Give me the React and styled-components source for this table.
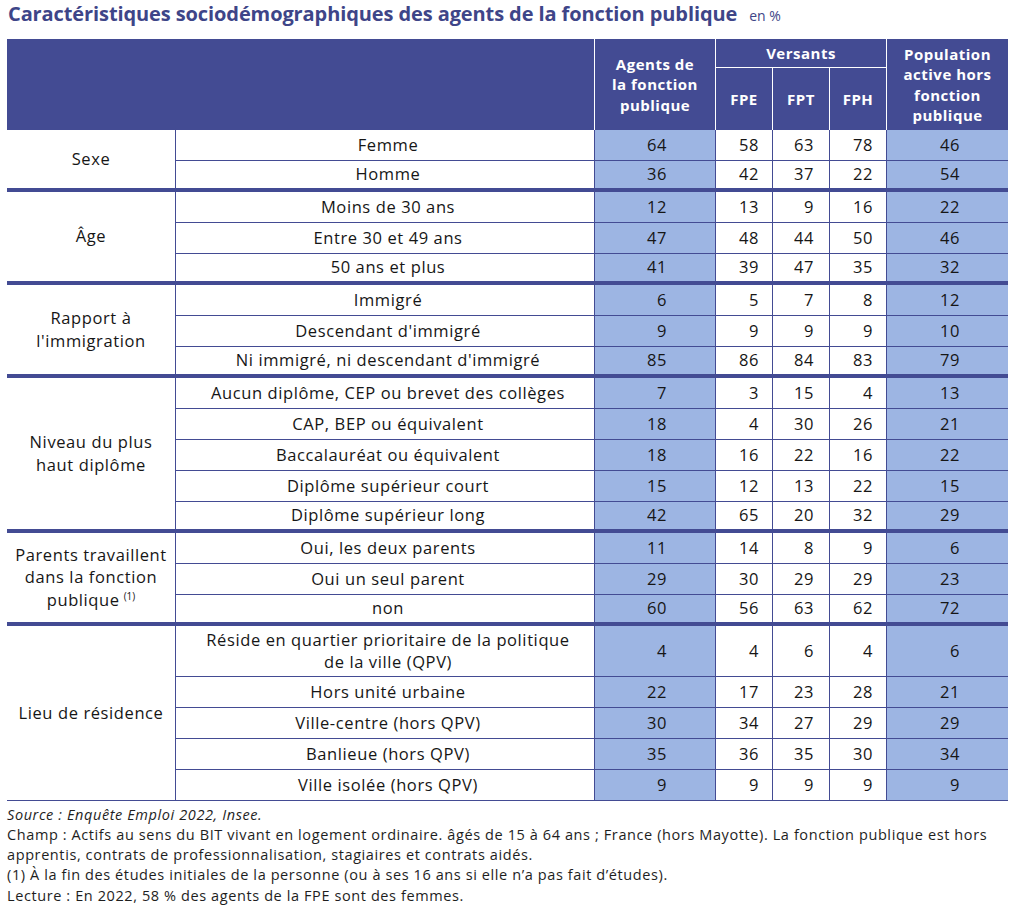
import React from 'react'
import styled, { createGlobalStyle } from 'styled-components'

const DARK = '#434b93'
const LIGHT = '#9db5e3'
const FONT = `"Open Sans", Lato, sans-serif`

const groups = [
  {
    label: 'Sexe',
    rows: [
      ['Femme', 64, 58, 63, 78, 46],
      ['Homme', 36, 42, 37, 22, 54],
    ],
  },
  {
    label: 'Âge',
    rows: [
      ['Moins de 30 ans', 12, 13, 9, 16, 22],
      ['Entre 30 et 49 ans', 47, 48, 44, 50, 46],
      ['50 ans et plus', 41, 39, 47, 35, 32],
    ],
  },
  {
    label: ['Rapport à', "l'immigration"],
    rows: [
      ['Immigré', 6, 5, 7, 8, 12],
      ["Descendant d'immigré", 9, 9, 9, 9, 10],
      ["Ni immigré, ni descendant d'immigré", 85, 86, 84, 83, 79],
    ],
  },
  {
    label: ['Niveau du plus', 'haut diplôme'],
    rows: [
      ['Aucun diplôme, CEP ou brevet des collèges', 7, 3, 15, 4, 13],
      ['CAP, BEP ou équivalent', 18, 4, 30, 26, 21],
      ['Baccalauréat ou équivalent', 18, 16, 22, 16, 22],
      ['Diplôme supérieur court', 15, 12, 13, 22, 15],
      ['Diplôme supérieur long', 42, 65, 20, 32, 29],
    ],
  },
  {
    label: ['Parents travaillent', 'dans la fonction', 'publique'],
    note: true,
    rows: [
      ['Oui, les deux parents', 11, 14, 8, 9, 6],
      ['Oui un seul parent', 29, 30, 29, 29, 23],
      ['non', 60, 56, 63, 62, 72],
    ],
  },
  {
    label: 'Lieu de résidence',
    rows: [
      [['Réside en quartier prioritaire de la politique', 'de la ville (QPV)'], 4, 4, 6, 4, 6],
      ['Hors unité urbaine', 22, 17, 23, 28, 21],
      ['Ville-centre (hors QPV)', 30, 34, 27, 29, 29],
      ['Banlieue (hors QPV)', 35, 36, 35, 30, 34],
      ['Ville isolée (hors QPV)', 9, 9, 9, 9, 9],
    ],
  },
]

const lines = (v) =>
  Array.isArray(v)
    ? v.map((t, i) => (
        <React.Fragment key={i}>
          {i > 0 && <br />}
          {t}
        </React.Fragment>
      ))
    : v

const App = () => (
  <Page>
    <GlobalStyle />
    <TitleRow>
      <Title>Caractéristiques sociodémographiques des agents de la fonction publique</Title>
      <Unit>en %</Unit>
    </TitleRow>
    <Table>
      <colgroup>
        <col style={{ width: 169 }} />
        <col style={{ width: 419 }} />
        <col style={{ width: 121 }} />
        <col style={{ width: 57 }} />
        <col style={{ width: 57 }} />
        <col style={{ width: 57 }} />
        <col style={{ width: 121 }} />
      </colgroup>
      <thead>
        <HeadRow $h={29}>
          <Head colSpan={2} rowSpan={2} />
          <Head rowSpan={2}>Agents de<br />la fonction<br />publique</Head>
          <Head colSpan={3} $top>Versants</Head>
          <Head rowSpan={2} $last>Population<br />active hors<br />fonction<br />publique</Head>
        </HeadRow>
        <HeadRow $h={62}>
          <Head>FPE</Head>
          <Head>FPT</Head>
          <Head>FPH</Head>
        </HeadRow>
      </thead>
      <tbody>
        {groups.map((g, gi) =>
          g.rows.map((r, ri) => {
            const end = ri === g.rows.length - 1
            const thick = end && gi < groups.length - 1
            const tall = Array.isArray(r[0])
            return (
              <Row key={gi + '-' + ri} $tall={tall}>
                {ri === 0 && (
                  <Category rowSpan={g.rows.length} $thick={gi < groups.length - 1}>
                    {lines(g.label)}
                    {g.note && <Sup>(1)</Sup>}
                  </Category>
                )}
                <Label $thick={thick} $multi={tall}>{lines(r[0])}</Label>
                <Num $thick={thick} $hl $pad={48}>{r[1]}</Num>
                <Num $thick={thick} $pad={13}>{r[2]}</Num>
                <Num $thick={thick} $pad={15}>{r[3]}</Num>
                <Num $thick={thick} $pad={13}>{r[4]}</Num>
                <Num $thick={thick} $hl $last $pad={48}>{r[5]}</Num>
              </Row>
            )
          })
        )}
      </tbody>
    </Table>
    <Notes>
      <Source>Source : Enquête Emploi 2022, Insee.</Source>
      <Note $gap={1}>
        Champ : Actifs au sens du BIT vivant en logement ordinaire. âgés de 15 à 64 ans ; France (hors Mayotte). La fonction publique est hors
        <br />
        apprentis, contrats de professionnalisation, stagiaires et contrats aidés.
      </Note>
      <Note $gap={1}>(1) À la fin des études initiales de la personne (ou à ses 16 ans si elle n’a pas fait d’études).</Note>
      <Note>Lecture : En 2022, 58 % des agents de la FPE sont des femmes.</Note>
    </Notes>
  </Page>
)

export default App

const GlobalStyle = createGlobalStyle`
  body {
    margin: 0;
    background: #fff;
    font-family: ${FONT};
  }
`
const Page = styled.div`
  width: 1019px;
  padding: 0 0 0 7px;
  box-sizing: border-box;
`
const TitleRow = styled.div`
  display: flex;
  align-items: baseline;
  gap: 12px;
  height: 39px;
  padding-left: 1px;
`
const Title = styled.h1`
  margin: 0;
  font-size: 20px;
  line-height: 27px;
  font-weight: 700;
  color: #3e4588;
  letter-spacing: -0.1px;
`
const Unit = styled.span`
  font-size: 14px;
  color: #3e4588;
`
const Table = styled.table`
  width: 1001px;
  table-layout: fixed;
  border-collapse: separate;
  border-spacing: 0;
  font-family: ${FONT};
`
const HeadRow = styled.tr`
  height: ${(p) => p.$h}px;
`
const Head = styled.th`
  background: ${DARK};
  color: #fff;
  font-size: 15px;
  line-height: 20.5px;
  letter-spacing: 0.5px;
  font-weight: 700;
  text-align: center;
  vertical-align: middle;
  padding: 0;
  border-right: ${(p) => (p.$last ? 'none' : '1px solid #fff')};
  border-bottom: ${(p) => (p.$top ? '1px solid #fff' : 'none')};
  box-sizing: border-box;
`
const Row = styled.tr`
  height: ${(p) => (p.$tall ? '51px' : '31px')};
`
const Cell = styled.td`
  padding: 0;
  font-size: 16.5px;
  line-height: 22.5px;
  letter-spacing: 0.6px;
  color: #161616;
  vertical-align: middle;
  box-sizing: border-box;
  border-bottom: ${(p) => (p.$thick ? `4px solid ${DARK}` : `1px solid ${DARK}`)};
`
const Category = styled(Cell)`
  text-align: center;
  border-right: 1px solid ${DARK};
`
const Sup = styled.sup`
  font-size: 10px;
  margin-left: 4px;
  vertical-align: 6px;
  line-height: 0;
  letter-spacing: 0;
`
const Label = styled(Cell)`
  text-align: center;
  border-right: 1px solid ${DARK};
  padding-left: 6px;
`
const Num = styled(Cell)`
  text-align: right;
  padding-right: ${(p) => p.$pad}px;
  background: ${(p) => (p.$hl ? LIGHT : '#fff')};
  border-right: ${(p) => (p.$last ? 'none' : `1px solid ${DARK}`)};
`
const Notes = styled.div`
  padding-top: 4px;
  color: #1e1e1e;
  font-size: 14.5px;
  line-height: 19.75px;
  letter-spacing: 0.6px;
`
const Source = styled.p`
  margin: 0;
  font-style: italic;
`
const Note = styled.p`
  margin: 0 0 ${(p) => p.$gap || 0}px 0;
`
